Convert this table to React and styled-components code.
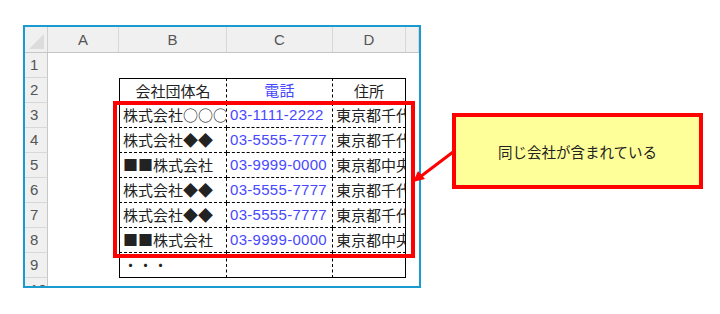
import styled, { createGlobalStyle } from 'styled-components'

const Global = createGlobalStyle`
  html, body { margin: 0; padding: 0; background: #ffffff; }
  * { box-sizing: border-box; }
`

const COLS = { head: 23, A: 71, B: 108, C: 106, D: 73 }

const Stage = styled.div`
  position: relative;
  width: 720px;
  height: 314px;
  padding: 25px 0 0 23px;
  overflow: hidden;
  font-family: "Noto Sans CJK JP", "Noto Sans", sans-serif;
`

const Frame = styled.div`
  width: 398px;
  height: 263px;
  border: 2px solid #1a9bd0;
  overflow: hidden;
  display: flex;
  flex-direction: column;
`

const ColHeadRow = styled.div`
  display: flex;
  height: 26px;
  flex: none;
  background: #f0f0f0;
  border-bottom: 1px solid #c6c6c6;
`

const Corner = styled.div`
  position: relative;
  width: ${COLS.head}px;
  flex: none;
  border-right: 1px solid #d0d0d0;
  &::after {
    content: '';
    position: absolute;
    right: 3px;
    bottom: 3px;
    border-style: solid;
    border-width: 0 0 15px 15px;
    border-color: transparent transparent #dcdcdc transparent;
  }
`

const ColHead = styled.div`
  width: ${p => (p.$w ? p.$w + 'px' : 'auto')};
  flex: ${p => (p.$w ? 'none' : '1')};
  border-right: 1px solid #d8d8d8;
  display: flex;
  align-items: center;
  justify-content: center;
  font-family: "Liberation Sans", Arial, sans-serif;
  font-size: 15px;
  color: #555;
`

const Row = styled.div`
  display: flex;
  height: 25px;
  flex: none;
`

const RowHead = styled.div`
  width: ${COLS.head}px;
  flex: none;
  background: #f0f0f0;
  border-right: 1px solid #c6c6c6;
  border-bottom: 1px solid #d8d8d8;
  padding-left: 5px;
  font-family: "Liberation Sans", Arial, sans-serif;
  font-size: 15px;
  line-height: 24px;
  color: #555;
`

const Blank = styled.div`
  width: ${p => (p.$w ? p.$w + 'px' : 'auto')};
  flex: ${p => (p.$w ? 'none' : '1')};
`

const Cell = styled.div`
  width: ${p => p.$w}px;
  flex: none;
  overflow: hidden;
  white-space: nowrap;
  padding: 0 3px;
  font-size: 15px;
  line-height: 24px;
  color: ${p => (p.$blue ? '#4848ff' : '#222')};
  font-family: ${p => (p.$num ? '"Liberation Sans", "Noto Sans CJK JP", sans-serif' : '"Noto Sans CJK JP", sans-serif')};
  letter-spacing: ${p => (p.$num ? '0.3px' : '0')};
  text-align: ${p => (p.$center ? 'center' : 'left')};
  border-left: ${p => (p.$first ? '1px solid #000' : 'none')};
  border-right: 1px ${p => (p.$last ? 'solid' : 'dashed')} #000;
  border-top: ${p => (p.$top ? '1px solid #000' : 'none')};
  border-bottom: 1px ${p => (p.$bottom ? 'solid' : 'dashed')} #000;
`

const RedBox = styled.div`
  position: absolute;
  left: 113px;
  top: 101px;
  width: 302px;
  height: 157px;
  border: 4px solid #ff0000;
`

const Callout = styled.div`
  position: absolute;
  left: 452px;
  top: 113px;
  width: 251px;
  height: 76px;
  border: 4px solid #ff0000;
  background: #ffff99;
  display: flex;
  align-items: center;
  justify-content: center;
  font-size: 14.5px;
  color: #222;
`

const Arrow = styled.svg`
  position: absolute;
  left: 400px;
  top: 140px;
`

const records = [
  ['株式会社○○○', '03-1111-2222', '東京都千代田区'],
  ['株式会社◆◆', '03-5555-7777', '東京都千代田区'],
  ['■■株式会社', '03-9999-0000', '東京都中央区'],
  ['株式会社◆◆', '03-5555-7777', '東京都千代田区'],
  ['株式会社◆◆', '03-5555-7777', '東京都千代田区'],
  ['■■株式会社', '03-9999-0000', '東京都中央区'],
]

function TableRow({ n, cells, top, bottom, header }) {
  return (
    <Row>
      <RowHead>{n}</RowHead>
      <Blank $w={COLS.A} />
      <Cell $w={COLS.B} $first $top={top} $bottom={bottom} $center={header}>{cells[0]}</Cell>
      <Cell $w={COLS.C} $num $blue $top={top} $bottom={bottom} $center={header}>{cells[1]}</Cell>
      <Cell $w={COLS.D} $last $top={top} $bottom={bottom} $center={header}>{cells[2]}</Cell>
      <Blank />
    </Row>
  )
}

export default function App() {
  return (
    <Stage>
      <Global />
      <Frame>
        <ColHeadRow>
          <Corner />
          <ColHead $w={COLS.A}>A</ColHead>
          <ColHead $w={COLS.B}>B</ColHead>
          <ColHead $w={COLS.C}>C</ColHead>
          <ColHead $w={COLS.D}>D</ColHead>
          <ColHead />
        </ColHeadRow>
        <Row>
          <RowHead>1</RowHead>
          <Blank />
        </Row>
        <TableRow n="2" header top cells={['会社団体名', '電話', '住所']} />
        {records.map((r, i) => (
          <TableRow key={i} n={String(i + 3)} cells={r} />
        ))}
        <TableRow n="9" bottom cells={['・・・', '', '']} />
        <Row>
          <RowHead>10</RowHead>
          <Blank />
        </Row>
      </Frame>

      <RedBox />
      <Arrow width="60" height="50" viewBox="0 0 60 50">
        <line x1="53" y1="12" x2="20" y2="37" stroke="#ff0000" strokeWidth="3" />
        <polygon points="13,42 18,31 25,39" fill="#ff0000" />
      </Arrow>
      <Callout>同じ会社が含まれている</Callout>
    </Stage>
  )
}
